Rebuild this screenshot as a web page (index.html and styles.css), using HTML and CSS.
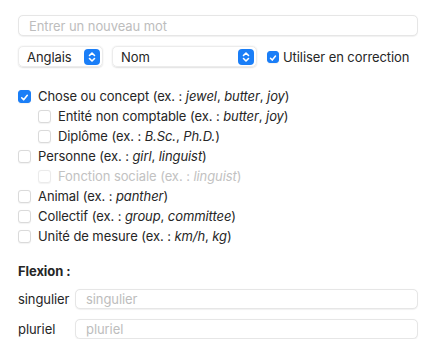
FILE: index.html
```html
<!DOCTYPE html>
<html lang="fr">
<head>
<meta charset="utf-8">
<link rel="stylesheet" href="styles.css">
</head>
<body>
<div class="panel">
  <div class="field word"><span class="ph">Entrer un nouveau mot</span></div>
  <div class="toolbar">
    <div class="popup lang"><span>Anglais</span><span class="stepper"><svg width="16" height="16" viewBox="0 0 16 16"><path d="M5.5 6.5 8 4 10.5 6.5M5.5 9.5 8 12 10.5 9.5" fill="none" stroke="#fff" stroke-width="1.6" stroke-linecap="round" stroke-linejoin="round"/></svg></span></div>
    <div class="popup pos"><span>Nom</span><span class="stepper"><svg width="16" height="16" viewBox="0 0 16 16"><path d="M5.5 6.5 8 4 10.5 6.5M5.5 9.5 8 12 10.5 9.5" fill="none" stroke="#fff" stroke-width="1.6" stroke-linecap="round" stroke-linejoin="round"/></svg></span></div>
    <label class="check"><span class="box on"><svg width="12" height="12" viewBox="0 0 12 12"><path d="M3 6.3 5.1 8.5 9 3.6" fill="none" stroke="#fff" stroke-width="1.8" stroke-linecap="round" stroke-linejoin="round"/></svg></span><span>Utiliser en correction</span></label>
  </div>
  <div class="list">
    <div class="item"><span class="box on"><svg width="13" height="13" viewBox="0 0 13 13"><path d="M3.2 6.8 5.5 9.2 9.8 3.9" fill="none" stroke="#fff" stroke-width="1.9" stroke-linecap="round" stroke-linejoin="round"/></svg></span><span>Chose ou concept (ex. : <i>jewel</i>, <i>butter</i>, <i>joy</i>)</span></div>
    <div class="item sub"><span class="box"></span><span>Entité non comptable (ex. : <i>butter</i>, <i>joy</i>)</span></div>
    <div class="item sub"><span class="box"></span><span>Diplôme (ex. : <i>B.Sc.</i>, <i>Ph.D.</i>)</span></div>
    <div class="item"><span class="box"></span><span>Personne (ex. : <i>girl</i>, <i>linguist</i>)</span></div>
    <div class="item sub disabled"><span class="box"></span><span>Fonction sociale (ex. : <i>linguist</i>)</span></div>
    <div class="item"><span class="box"></span><span>Animal (ex. : <i>panther</i>)</span></div>
    <div class="item"><span class="box"></span><span>Collectif (ex. : <i>group</i>, <i>committee</i>)</span></div>
    <div class="item"><span class="box"></span><span>Unité de mesure (ex. : <i>km/h</i>, <i>kg</i>)</span></div>
  </div>
  <div class="heading">Flexion :</div>
  <div class="form-row"><span class="lbl">singulier</span><div class="field"><span class="ph">singulier</span></div></div>
  <div class="form-row"><span class="lbl">pluriel</span><div class="field"><span class="ph">pluriel</span></div></div>
</div>
</body>
</html>
```
FILE: styles.css
```css
* { box-sizing: border-box; }
html, body { margin: 0; background: #fff; }
body {
  font-family: Inter, "Noto Sans", "Liberation Sans", sans-serif;
  font-size: 13px;
  letter-spacing: -0.08px;
  color: #262626;
}
.panel { padding: 15px 18px 0 18px; width: 436px; }
.field {
  height: 21px;
  border: 1px solid #e6e6e6;
  border-radius: 5px;
  background: #fff;
  display: flex;
  align-items: center;
  padding-left: 10px;
  box-shadow: 0 0.5px 1px rgba(0,0,0,0.06);
}
.ph { color: #bdbdbd; }
.toolbar { display: flex; align-items: center; margin-top: 10px; height: 21px; }
.popup {
  height: 21px;
  border: 1px solid #ececec;
  border-radius: 5px;
  display: flex;
  align-items: center;
  justify-content: space-between;
  padding: 0 2px 0 8px;
  box-shadow: 0 0.5px 1.5px rgba(0,0,0,0.12);
}
.lang { width: 85px; }
.pos { width: 145px; margin-left: 9px; }
.stepper {
  width: 16px; height: 16px;
  border-radius: 4px;
  background: #1a7ef7;
  display: flex;
}
.check { display: flex; align-items: center; margin-left: 10px; }
.check .box { width: 12px; height: 12px; margin-right: 4px; }
.box {
  width: 13px; height: 13px;
  border: 1px solid #dadada;
  border-radius: 3px;
  background: #fff;
  flex: none;
  display: flex;
  box-shadow: 0 0.5px 1px rgba(0,0,0,0.05);
}
.box.on { background: #1a7ef7; border-color: #1a7ef7; }
.list { margin-top: 19px; }
.item { height: 20px; display: flex; align-items: center; }
.item .box { margin-right: 7px; }
.item.sub { padding-left: 20px; }
.item.disabled { color: #c2c2c2; }
.item.disabled .box { border-color: #ebebeb; }
.heading { font-weight: 700; margin-top: 16px; height: 18px; display: flex; align-items: center; }
.form-row { display: flex; align-items: center; margin-top: 9px; height: 20px; }
.form-row .lbl { width: 57px; }
.form-row .field { flex: 1; height: 20px; }
.form-row + .form-row { margin-top: 10px; }
```
